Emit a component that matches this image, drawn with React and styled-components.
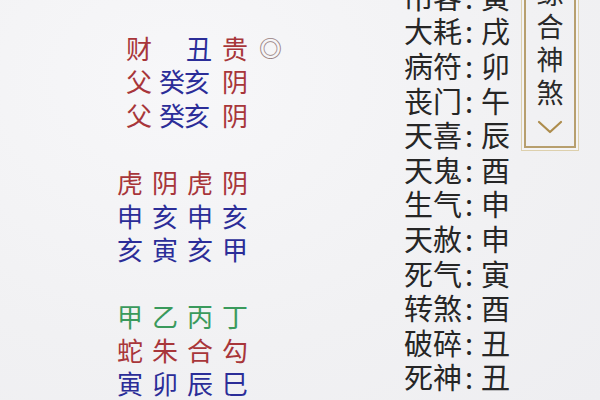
import React from 'react'
import styled, { createGlobalStyle } from 'styled-components'

const Global = createGlobalStyle`
  html, body {
    margin: 0;
    padding: 0;
    background: #f3f3f5;
  }
  #root {
    width: 600px;
    height: 400px;
    overflow: hidden;
  }
`

const Page = styled.div`
  display: flex;
  width: 600px;
  height: 400px;
  overflow: hidden;
  background: radial-gradient(ellipse at 30% 20%, #f7f7f9 0%, #f1f1f3 60%, #eeeef1 100%);
  font-family: "Noto Sans CJK SC", "Noto Sans", sans-serif;
`

const LeftPane = styled.div`
  width: 404px;
  box-sizing: border-box;
  padding: 31px 0 0 117px;
  display: flex;
  flex-direction: column;
`

const Line = styled.div`
  display: flex;
  height: 34.4px;
  align-items: center;
  padding-left: ${p => p.$indent || 0}px;
  font-size: 26px;
`

const Cell = styled.span`
  width: ${p => p.$w}px;
  flex-shrink: 0;
  color: ${p => p.$color};
  line-height: 1;
`

const Ring = styled.span`
  font-size: 23px;
  color: #9a8282;
  line-height: 1;
`

const RightList = styled.div`
  width: 120px;
  margin-top: -21px;
  display: flex;
  flex-direction: column;
  color: #262626;
  font-size: 29px;
`

const Row = styled.div`
  display: grid;
  grid-template-columns: 58px 19px auto;
  height: 34.6px;
  align-items: center;
  line-height: 1;
  white-space: nowrap;
`

const Colon = styled.span`
  padding-left: 3px;
`

const SideBox = styled.div`
  width: 52px;
  height: 188px;
  margin-top: -40px;
  border: 2px solid #b79f6e;
  box-shadow: 0 0 0 2px #f4f4f5, 0 0 0 3px #ddd0ad;
  display: flex;
  flex-direction: column;
  align-items: center;
  padding-top: 14px;
  box-sizing: border-box;
  color: #2a2a2a;
  font-size: 27px;
`

const BoxChar = styled.span`
  height: 33px;
  line-height: 33px;
`

const Chevron = styled.svg`
  margin-top: 12px;
`

const red = '#a8363a'
const blue = '#2b2d98'
const green = '#3a9a5c'

const upper = [
  [['财', red, 60], ['丑', blue, 36], ['贵', red, 37]],
  [['父', red, 33], ['癸', blue, 25], ['亥', blue, 38], ['阴', red, 36]],
  [['父', red, 33], ['癸', blue, 25], ['亥', blue, 38], ['阴', red, 36]],
]

const grid = [
  [['虎', red], ['阴', red], ['虎', red], ['阴', red]],
  [['申', blue], ['亥', blue], ['申', blue], ['亥', blue]],
  [['亥', blue], ['寅', blue], ['亥', blue], ['甲', blue]],
  null,
  [['甲', green], ['乙', green], ['丙', green], ['丁', green]],
  [['蛇', red], ['朱', red], ['合', red], ['勾', red]],
  [['寅', blue], ['卯', blue], ['辰', blue], ['巳', blue]],
]

const shensha = [
  ['吊客', '寅'],
  ['大耗', '戌'],
  ['病符', '卯'],
  ['丧门', '午'],
  ['天喜', '辰'],
  ['天鬼', '酉'],
  ['生气', '申'],
  ['天赦', '申'],
  ['死气', '寅'],
  ['转煞', '酉'],
  ['破碎', '丑'],
  ['死神', '丑'],
]

export default function App() {
  return (
    <Page>
      <Global />
      <LeftPane>
        {upper.map((line, i) => (
          <Line key={'u' + i} $indent={9}>
            {line.map(([c, col, w], j) => (
              <Cell key={j} $w={w} $color={col}>{c}</Cell>
            ))}
            {i === 0 && <Ring>◎</Ring>}
          </Line>
        ))}
        <Line />
        {grid.map((line, i) => (
          <Line key={'g' + i}>
            {line && line.map(([c, col], j) => (
              <Cell key={j} $w={35} $color={col}>{c}</Cell>
            ))}
          </Line>
        ))}
      </LeftPane>

      <RightList>
        {shensha.map(([name, zhi]) => (
          <Row key={name}>
            <span>{name}</span>
            <Colon>:</Colon>
            <span>{zhi}</span>
          </Row>
        ))}
      </RightList>

      <SideBox>
        <BoxChar>综</BoxChar>
        <BoxChar>合</BoxChar>
        <BoxChar>神</BoxChar>
        <BoxChar>煞</BoxChar>
        <Chevron width="26" height="14" viewBox="0 0 26 14">
          <path d="M2 2 L13 12 L24 2" fill="none" stroke="#ad8c4c" strokeWidth="2.2" strokeLinecap="round" strokeLinejoin="round" />
        </Chevron>
      </SideBox>
    </Page>
  )
}
